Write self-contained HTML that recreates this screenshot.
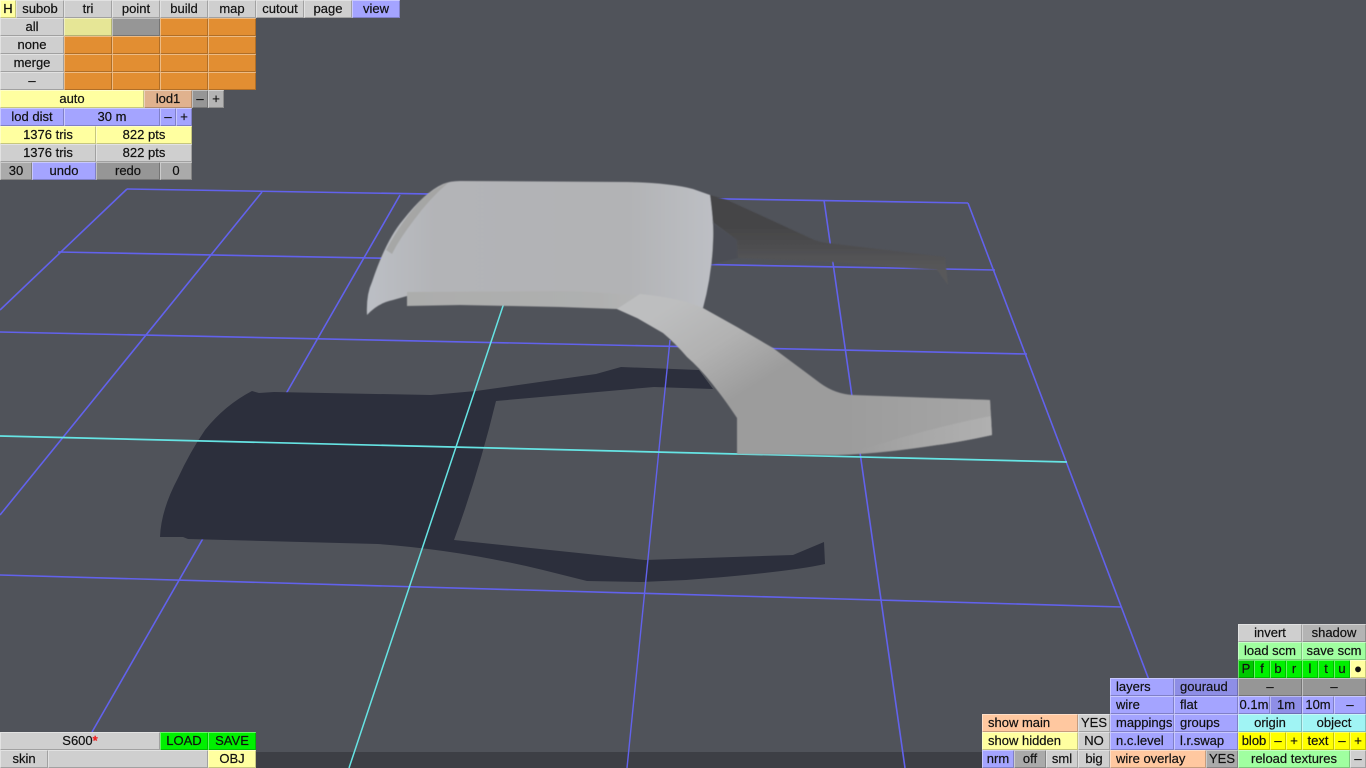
<!DOCTYPE html>
<html><head><meta charset="utf-8"><title>Editor</title>
<style>
html,body{margin:0;padding:0;width:1366px;height:768px;overflow:hidden;background:#50535a}
svg{position:absolute;left:0;top:0}
#ui div{position:absolute;height:18px;text-align:center;font:13px/17px "Liberation Sans",sans-serif;color:#111;-webkit-text-stroke:.2px #111;box-sizing:border-box;box-shadow:inset 1px 1px 0 rgba(255,255,255,.4),inset -1px -1px 0 rgba(0,0,0,.22);white-space:pre}
#ui div.l{text-align:left;padding-left:6px}
#ui .g{background:#cfcfcf}
#ui .d{background:#969696}
#ui .y{background:#ffffa0}
#ui .o{background:#e28e32}
#ui .p{background:#a4a4ff}
#ui .q{background:#8e8ee6}
#ui .t{background:#e0b28e}
#ui .c{background:#ffc8a0}
#ui .n{background:#00f000}
#ui .m{background:#00c800}
#ui .a{background:#a0ffa0}
#ui .b{background:#a0f4f4}
#ui .u{background:#ffff00}
#ui .e{background:#e6e696}
</style></head><body>
<svg width="1366" height="768" viewBox="0 0 1366 768">
<defs>
<linearGradient id="roof" gradientUnits="userSpaceOnUse" x1="367" y1="0" x2="713" y2="0"><stop offset="0" stop-color="#bcbfc5"/><stop offset=".2" stop-color="#b3b4b7"/><stop offset=".75" stop-color="#b2b3b5"/><stop offset="1" stop-color="#bdbfc4"/></linearGradient>
<linearGradient id="lip" gradientUnits="userSpaceOnUse" x1="407" y1="0" x2="700" y2="0"><stop offset="0" stop-color="#acadac"/><stop offset=".65" stop-color="#afb0b0"/><stop offset="1" stop-color="#bbbcbd"/></linearGradient>
<linearGradient id="side" gradientUnits="userSpaceOnUse" x1="680" y1="300" x2="740" y2="395"><stop offset="0" stop-color="#bdbebf"/><stop offset=".5" stop-color="#b2b2b2"/><stop offset="1" stop-color="#9c9c9c"/></linearGradient>
<linearGradient id="tip" gradientUnits="userSpaceOnUse" x1="840" y1="0" x2="990" y2="0"><stop offset="0" stop-color="#a6a6a6" stop-opacity="0"/><stop offset="1" stop-color="#a6a6a6"/></linearGradient>
<linearGradient id="tipb" gradientUnits="userSpaceOnUse" x1="860" y1="0" x2="992" y2="0"><stop offset="0" stop-color="#b4b4b4" stop-opacity="0"/><stop offset="1" stop-color="#b4b4b4" stop-opacity=".7"/></linearGradient>
<linearGradient id="spoil" gradientUnits="userSpaceOnUse" x1="800" y1="225" x2="800" y2="270"><stop offset="0" stop-color="#444446"/><stop offset="1" stop-color="#58585a"/></linearGradient>
<filter id="s" x="-5%" y="-5%" width="110%" height="110%"><feGaussianBlur stdDeviation=".5"/></filter>
</defs>
<rect x="256" y="752" width="726" height="16" fill="#3d3f45"/>
<g fill="none" stroke="#6262ec" stroke-width="1.6">
<path d="M127 189L968 203M58 252L995 270M0 332L1027 354M0 575L1122 607"/>
<path d="M127 189L0 310M262 192L0 515M400 195L92 732M824 200L905 768M968 203L1149 680"/>
</g>
<path fill="#2c2f3c" d="M252 391L259 393L274 392L431 395L476 391L596 374L621 367L699 370L713 389L654 387L496 401Q478 475 454 540L645 560L793 555L824 542L825 564Q790 572 686 580L641 582L587 581L543 570Q460 550 378 544L188 539L183 537L160 537Q161 510 178 478Q190 452 205 430Q225 405 252 391Z"/>
<g fill="none">
<path d="M670 340L627 768" stroke="#6262ec" stroke-width="1.4"/>
<path d="M0 436L1067 462" stroke="#66e4e4" stroke-width="1.7"/>
<path d="M505 300L349 768" stroke="#66e4e4" stroke-width="1.5"/>
</g>
<g filter="url(#s)">
<path fill="#4b4e54" d="M711 222L737 240L738 258L710 265Z"/>
<path fill="url(#spoil)" d="M710 195L727 200L760 215L810 238Q818 242 827 243L945 257L948 285L937 270L833 262L738 258L737 240L713 222Z"/>
<path fill="url(#roof)" d="M367 315Q366 295 372 282Q386 240 403 220Q425 192 443 184Q450 181 460 181L627 182Q670 183 693 189L710 195Q714 225 713 240Q712 275 703 308L660 300L407 296L393 300Q378 303 367 315Z"/>
<path fill="#a0a09d" d="M386 250Q402 220 423 198Q435 188 449 182Q430 198 414 220Q400 238 392 254Z" opacity=".75"/>
<path fill="url(#lip)" d="M407 292L560 291Q640 292 703 308L690 320L637 318L617 309L560 307L460 305L407 306Z"/>
<path fill="url(#side)" d="M640 294Q680 298 703 308L737 327L773 348Q800 368 820 383Q835 394 853 395L990 400L992 435Q960 442 937 445Q880 454 837 455L737 454L737 418Q725 400 717 390Q702 370 687 357Q675 343 663 333L637 318L617 309Z"/>
<path fill="url(#tip)" d="M840 395L990 400L992 435Q960 442 937 445Q880 454 840 455Z"/>
<path fill="url(#tipb)" d="M860 450Q930 428 991 416L992 435Q960 442 937 445Q900 450 860 452Z"/>
</g>
</svg>
<div id="ui">
<div class="y" style="left:0;top:0;width:16px">H</div>
<div class="g" style="left:16px;top:0;width:48px">subob</div>
<div class="g" style="left:64px;top:0;width:48px">tri</div>
<div class="g" style="left:112px;top:0;width:48px">point</div>
<div class="g" style="left:160px;top:0;width:48px">build</div>
<div class="g" style="left:208px;top:0;width:48px">map</div>
<div class="g" style="left:256px;top:0;width:48px">cutout</div>
<div class="g" style="left:304px;top:0;width:48px">page</div>
<div class="p" style="left:352px;top:0;width:48px">view</div>

<div class="g" style="left:0;top:18px;width:64px">all</div>
<div class="e" style="left:64px;top:18px;width:48px"></div>
<div class="d" style="left:112px;top:18px;width:48px"></div>
<div class="o" style="left:160px;top:18px;width:48px"></div>
<div class="o" style="left:208px;top:18px;width:48px"></div>
<div class="g" style="left:0;top:36px;width:64px">none</div>
<div class="o" style="left:64px;top:36px;width:48px"></div>
<div class="o" style="left:112px;top:36px;width:48px"></div>
<div class="o" style="left:160px;top:36px;width:48px"></div>
<div class="o" style="left:208px;top:36px;width:48px"></div>
<div class="g" style="left:0;top:54px;width:64px">merge</div>
<div class="o" style="left:64px;top:54px;width:48px"></div>
<div class="o" style="left:112px;top:54px;width:48px"></div>
<div class="o" style="left:160px;top:54px;width:48px"></div>
<div class="o" style="left:208px;top:54px;width:48px"></div>
<div class="g" style="left:0;top:72px;width:64px">–</div>
<div class="o" style="left:64px;top:72px;width:48px"></div>
<div class="o" style="left:112px;top:72px;width:48px"></div>
<div class="o" style="left:160px;top:72px;width:48px"></div>
<div class="o" style="left:208px;top:72px;width:48px"></div>

<div class="y" style="left:0;top:90px;width:144px">auto</div>
<div class="t" style="left:144px;top:90px;width:48px">lod1</div>
<div class="d" style="left:192px;top:90px;width:16px">–</div>
<div class="g" style="left:208px;top:90px;width:16px;background:#b4b4b4">+</div>

<div class="p" style="left:0;top:108px;width:64px">lod dist</div>
<div class="p" style="left:64px;top:108px;width:96px">30 m</div>
<div class="p" style="left:160px;top:108px;width:16px">–</div>
<div class="p" style="left:176px;top:108px;width:16px">+</div>

<div class="y" style="left:0;top:126px;width:96px">1376 tris</div>
<div class="y" style="left:96px;top:126px;width:96px">822 pts</div>
<div class="g" style="left:0;top:144px;width:96px">1376 tris</div>
<div class="g" style="left:96px;top:144px;width:96px">822 pts</div>

<div class="d" style="left:0;top:162px;width:32px;background:#aaa">30</div>
<div class="p" style="left:32px;top:162px;width:64px">undo</div>
<div class="d" style="left:96px;top:162px;width:64px">redo</div>
<div class="d" style="left:160px;top:162px;width:32px;background:#aaa">0</div>

<div class="g" style="left:0;top:732px;width:160px">S600<span style="color:#f02020;-webkit-text-stroke:.6px #f02020">*</span></div>
<div class="n" style="left:160px;top:732px;width:48px">LOAD</div>
<div class="n" style="left:208px;top:732px;width:48px">SAVE</div>
<div class="g" style="left:0;top:750px;width:48px">skin</div>
<div class="g" style="left:48px;top:750px;width:160px"></div>
<div class="y" style="left:208px;top:750px;width:48px">OBJ</div>

<div class="g" style="left:1238px;top:624px;width:64px">invert</div>
<div class="g" style="left:1302px;top:624px;width:64px;background:#b4b4b4">shadow</div>
<div class="a" style="left:1238px;top:642px;width:64px">load scm</div>
<div class="a" style="left:1302px;top:642px;width:64px">save scm</div>
<div class="m" style="left:1238px;top:660px;width:16px">P</div>
<div class="n" style="left:1254px;top:660px;width:16px">f</div>
<div class="n" style="left:1270px;top:660px;width:16px">b</div>
<div class="n" style="left:1286px;top:660px;width:16px">r</div>
<div class="n" style="left:1302px;top:660px;width:16px">l</div>
<div class="n" style="left:1318px;top:660px;width:16px">t</div>
<div class="n" style="left:1334px;top:660px;width:16px">u</div>
<div class="y" style="left:1350px;top:660px;width:16px">●</div>

<div class="p l" style="left:1110px;top:678px;width:64px">layers</div>
<div class="q l" style="left:1174px;top:678px;width:64px">gouraud</div>
<div class="d" style="left:1238px;top:678px;width:64px">–</div>
<div class="d" style="left:1302px;top:678px;width:64px">–</div>

<div class="p l" style="left:1110px;top:696px;width:64px">wire</div>
<div class="p l" style="left:1174px;top:696px;width:64px">flat</div>
<div class="p" style="left:1238px;top:696px;width:32px">0.1m</div>
<div class="q" style="left:1270px;top:696px;width:32px">1m</div>
<div class="p" style="left:1302px;top:696px;width:32px">10m</div>
<div class="p" style="left:1334px;top:696px;width:32px">–</div>

<div class="c l" style="left:982px;top:714px;width:96px">show main</div>
<div class="g" style="left:1078px;top:714px;width:32px">YES</div>
<div class="p l" style="left:1110px;top:714px;width:64px">mappings</div>
<div class="p l" style="left:1174px;top:714px;width:64px">groups</div>
<div class="b" style="left:1238px;top:714px;width:64px">origin</div>
<div class="b" style="left:1302px;top:714px;width:64px">object</div>

<div class="y l" style="left:982px;top:732px;width:96px">show hidden</div>
<div class="g" style="left:1078px;top:732px;width:32px">NO</div>
<div class="p l" style="left:1110px;top:732px;width:64px">n.c.level</div>
<div class="p l" style="left:1174px;top:732px;width:64px">l.r.swap</div>
<div class="u" style="left:1238px;top:732px;width:32px">blob</div>
<div class="u" style="left:1270px;top:732px;width:16px">–</div>
<div class="u" style="left:1286px;top:732px;width:16px">+</div>
<div class="u" style="left:1302px;top:732px;width:32px">text</div>
<div class="u" style="left:1334px;top:732px;width:16px">–</div>
<div class="u" style="left:1350px;top:732px;width:16px">+</div>

<div class="p" style="left:982px;top:750px;width:32px">nrm</div>
<div class="d" style="left:1014px;top:750px;width:32px;background:#aaa">off</div>
<div class="g" style="left:1046px;top:750px;width:32px">sml</div>
<div class="g" style="left:1078px;top:750px;width:32px">big</div>
<div class="c l" style="left:1110px;top:750px;width:96px">wire overlay</div>
<div class="d" style="left:1206px;top:750px;width:32px;background:#aaa">YES</div>
<div class="a" style="left:1238px;top:750px;width:112px">reload textures</div>
<div class="g" style="left:1350px;top:750px;width:16px">–</div>
</div>
</body></html>
